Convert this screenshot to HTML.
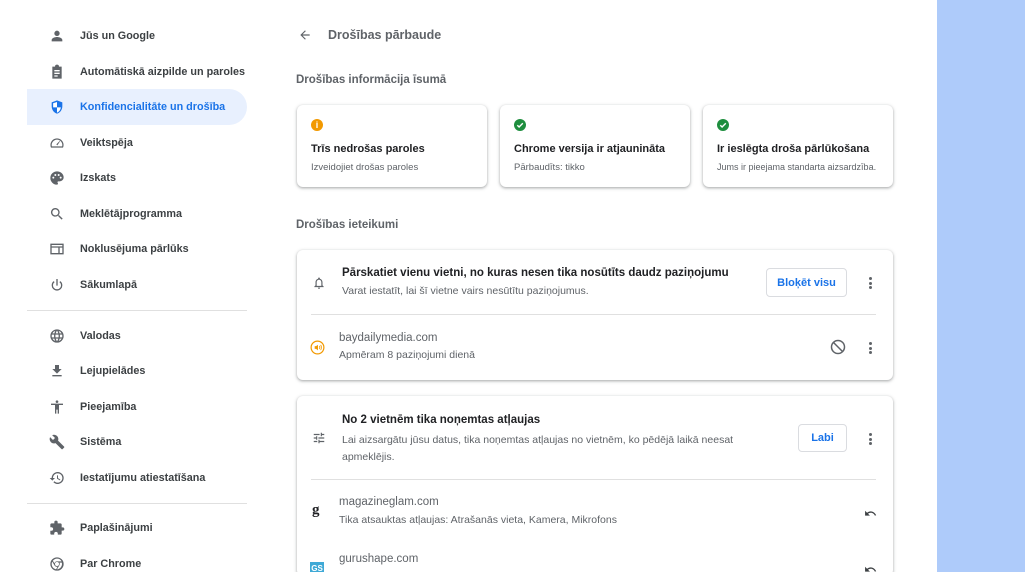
<!DOCTYPE html>
<html><head><meta charset="utf-8"><style>
*{margin:0;padding:0;box-sizing:border-box}
html,body{width:1025px;height:572px;overflow:hidden}
body{background:#fff;font-family:"Liberation Sans",Arial,sans-serif;position:relative;color:#202124}
.it{position:absolute;left:0;height:36px;width:247px;font-size:10.8px;font-weight:bold;color:#3c4043;white-space:nowrap}
.it svg{position:absolute;left:49px;top:10px;width:16px;height:16px;fill:#5f6368}
.it span{position:absolute;left:80px;top:12px}
.sel{background:#e8f0fe;left:27px;width:220px;border-radius:0 18px 18px 0}
.sel svg{left:22px;fill:#1a73e8}.sel span{left:53px;color:#1a73e8}
.hr{position:absolute;left:27px;width:220px;height:1px;background:#e0e0e0}
.right{position:absolute;left:937px;top:0;width:88px;height:572px;background:#aecbfa}
.abs{position:absolute;white-space:nowrap}
.card{position:absolute;background:#fff;border-radius:6px;box-shadow:0 1px 2px rgba(60,64,67,.3),0 1px 3px 1px rgba(60,64,67,.15);overflow:hidden}
.t{font-size:11px;font-weight:bold;color:#202124}
.s{font-size:9.5px;color:#5f6368}
.h{font-size:11.5px;font-weight:bold;color:#5f6368}
.btn{position:absolute;border:1px solid #dadce0;border-radius:4px;color:#1a73e8;font-size:11px;font-weight:bold;display:flex;align-items:center;justify-content:center}
.dots{position:absolute;width:3px}
.dots i{display:block;width:3px;height:3px;border-radius:50%;background:#5f6368;margin-bottom:1.5px}
.line{position:absolute;height:1px;background:#e0e0e0}
</style></head><body>
<div class="it" style="top:18px"><svg viewBox="0 0 24 24"><circle cx="12" cy="8" r="4"/><path d="M4 20v-2c0-3 5-4.5 8-4.5s8 1.5 8 4.5v2z"/></svg><span>Jūs un Google</span></div>
<div class="it" style="top:54px"><svg viewBox="0 0 24 24"><path d="M5 4h4a3 3 0 0 1 6 0h4v18H5zM8 9h8v2H8zm0 4h8v2H8zm0 4h5v2H8z" fill-rule="evenodd"/></svg><span>Automātiskā aizpilde un paroles</span></div>
<div class="it sel" style="top:89px"><svg viewBox="0 0 24 24"><path d="M12 2 4 5v6c0 5 3.4 9.7 8 11 4.6-1.3 8-6 8-11V5z"/><path d="M12 4.5v8H6.2V6.3zM12 12.5h5.8c-.5 3.8-2.9 6.9-5.8 7.9z" fill="#fff"/></svg><span>Konfidencialitāte un drošība</span></div>
<div class="it" style="top:125px"><svg viewBox="0 0 24 24"><path d="M12 5a10 10 0 0 0-9 14h18A10 10 0 0 0 12 5zm0 2a8 8 0 0 1 7.7 10H4.3A8 8 0 0 1 12 7zm4 2-5 5 1.5 1.5 4-6z"/></svg><span>Veiktspēja</span></div>
<div class="it" style="top:160px"><svg viewBox="0 0 24 24"><path d="M12 2a10 10 0 0 0 0 20c1 0 1.5-.7 1.5-1.5 0-1-.8-1.3-.8-2.2 0-.8.7-1.3 1.5-1.3H16a6 6 0 0 0 6-6C22 6 17.5 2 12 2zM6.5 13a1.5 1.5 0 1 1 0-3 1.5 1.5 0 0 1 0 3zm3-4a1.5 1.5 0 1 1 0-3 1.5 1.5 0 0 1 0 3zm5 0a1.5 1.5 0 1 1 0-3 1.5 1.5 0 0 1 0 3zm3 4a1.5 1.5 0 1 1 0-3 1.5 1.5 0 0 1 0 3z"/></svg><span>Izskats</span></div>
<div class="it" style="top:196px"><svg viewBox="0 0 24 24"><path d="M15.5 14h-.8l-.3-.3A6.5 6.5 0 1 0 9.5 16a6.5 6.5 0 0 0 4.2-1.6l.3.3v.8l5 5 1.5-1.5zm-6 0a4.5 4.5 0 1 1 0-9 4.5 4.5 0 0 1 0 9z"/></svg><span>Meklētājprogramma</span></div>
<div class="it" style="top:231px"><svg viewBox="0 0 24 24"><path d="M2 4h20v16H2zm2 6v8h10v-8zm12 0v8h4v-8zM4 6v2h16V6z" fill-rule="evenodd"/></svg><span>Noklusējuma pārlūks</span></div>
<div class="it" style="top:267px"><svg viewBox="0 0 24 24"><path d="M11 3h2v10h-2zM7 6.2l1.4 1.4a6 6 0 1 0 7.2 0L17 6.2A8 8 0 1 1 7 6.2z"/></svg><span>Sākumlapā</span></div>
<div class="hr" style="top:310px"></div>
<div class="it" style="top:318px"><svg viewBox="0 0 24 24"><path d="M12 2a10 10 0 1 0 0 20 10 10 0 0 0 0-20zm6.9 6h-3a15 15 0 0 0-1.4-3.6A8 8 0 0 1 18.9 8zM12 4c.8 1.2 1.5 2.5 1.9 4h-3.8c.4-1.4 1.1-2.8 1.9-4zM4.3 14a8 8 0 0 1 0-4h3.4a16 16 0 0 0 0 4zm.8 2h3a15 15 0 0 0 1.4 3.6A8 8 0 0 1 5.1 16zm3-8h-3a8 8 0 0 1 4.3-3.6C8.9 5.5 8.5 6.7 8.1 8zM12 20c-.8-1.2-1.5-2.5-1.9-4h3.8c-.4 1.4-1.1 2.8-1.9 4zm2.3-6H9.7a14 14 0 0 1 0-4h4.6a14 14 0 0 1 0 4zm.3 5.6c.6-1.1 1.1-2.300 1.4-3.6h3a8 8 0 0 1-4.4 3.6zm1.7-5.6a16 16 0 0 0 0-4h3.4a8 8 0 0 1 0 4z"/></svg><span>Valodas</span></div>
<div class="it" style="top:353px"><svg viewBox="0 0 24 24"><path d="M19 9h-4V3H9v6H5l7 7zM5 18v2h14v-2z"/></svg><span>Lejupielādes</span></div>
<div class="it" style="top:389px"><svg viewBox="0 0 24 24"><path d="M12 2a2 2 0 1 1 0 4 2 2 0 0 1 0-4zm9 7h-6v13h-2v-6h-2v6H9V9H3V7h18z"/></svg><span>Pieejamība</span></div>
<div class="it" style="top:424px"><svg viewBox="0 0 24 24"><path d="M22.7 19 13.6 9.9c.9-2.3.4-5-1.5-6.9-2-2-5-2.4-7.4-1.3L9 6 6 9 1.6 4.7C.4 7.1.9 10.1 2.9 12.1c1.9 1.9 4.6 2.4 6.9 1.5l9.1 9.1c.4.4 1 .4 1.4 0l2.3-2.3c.5-.4.5-1.1.1-1.4z"/></svg><span>Sistēma</span></div>
<div class="it" style="top:460px"><svg viewBox="0 0 24 24"><path d="M13 3a9 9 0 0 0-9 9H1l4 4 4-4H6a7 7 0 1 1 2 4.9l-1.4 1.4A9 9 0 1 0 13 3zm-1 5v5l4.3 2.5.7-1.2-3.5-2.1V8z"/></svg><span>Iestatījumu atiestatīšana</span></div>
<div class="hr" style="top:503px"></div>
<div class="it" style="top:510px"><svg viewBox="0 0 24 24"><path d="M20.5 11H19V7a2 2 0 0 0-2-2h-4V3.5a2.5 2.5 0 0 0-5 0V5H4a2 2 0 0 0-2 2v3.8h1.5a2.7 2.7 0 0 1 0 5.4H2V20a2 2 0 0 0 2 2h3.8v-1.5a2.7 2.7 0 0 1 5.4 0V22H17a2 2 0 0 0 2-2v-4h1.5a2.5 2.5 0 0 0 0-5z"/></svg><span>Paplašinājumi</span></div>
<div class="it" style="top:546px"><svg viewBox="0 0 24 24"><path d="M12 2a10 10 0 1 0 0 20 10 10 0 0 0 0-20zm0 2a8 8 0 0 1 6.9 4H12a4 4 0 0 0-3.9 3.1L5.8 7.2A8 8 0 0 1 12 4zm3 8a3 3 0 1 1-6 0 3 3 0 0 1 6 0zM4 12c0-1.3.3-2.5.9-3.6l3.5 6a4 4 0 0 0 4.5 1.6l-2.3 4A8 8 0 0 1 4 12zm8 8 3.5-6a4 4 0 0 0 .3-4h3.4A8 8 0 0 1 12 20z"/></svg><span>Par Chrome</span></div>

<svg class="abs" style="left:298px;top:28px" width="14" height="14" viewBox="0 0 24 24"><path d="M20 11H7.8l5.6-5.6L12 4l-8 8 8 8 1.4-1.4L7.8 13H20z" fill="#5f6368"/></svg>
<div class="abs" style="left:328px;top:28px;font-size:12.5px;font-weight:bold;color:#5f6368">Drošības pārbaude</div>
<div class="abs h" style="left:296px;top:74px">Drošības informācija īsumā</div>

<div class="card" style="left:297px;top:105px;width:190px;height:82px">
<div class="abs" style="left:14px;top:14px;width:12px;height:12px;border-radius:50%;background:#f29900;color:#fff;font-size:9px;font-weight:bold;text-align:center;line-height:12px">i</div>
<div class="abs t" style="left:14px;top:38px">Trīs nedrošas paroles</div>
<div class="abs s" style="left:14px;top:57px">Izveidojiet drošas paroles</div></div>
<div class="card" style="left:500px;top:105px;width:190px;height:82px">
<svg class="abs" style="left:14px;top:14px" width="12" height="12" viewBox="0 0 12 12"><circle cx="6" cy="6" r="6" fill="#1e8e3e"/><path d="M3.3 6.2 5.1 8 8.8 4.3" stroke="#fff" stroke-width="1.4" fill="none"/></svg>
<div class="abs t" style="left:14px;top:38px">Chrome versija ir atjaunināta</div>
<div class="abs s" style="left:14px;top:57px">Pārbaudīts: tikko</div></div>
<div class="card" style="left:703px;top:105px;width:190px;height:82px">
<svg class="abs" style="left:14px;top:14px" width="12" height="12" viewBox="0 0 12 12"><circle cx="6" cy="6" r="6" fill="#1e8e3e"/><path d="M3.3 6.2 5.1 8 8.8 4.3" stroke="#fff" stroke-width="1.4" fill="none"/></svg>
<div class="abs t" style="left:14px;top:38px">Ir ieslēgta droša pārlūkošana</div>
<div class="abs s" style="left:14px;top:57px;font-size:9px">Jums ir pieejama standarta aizsardzība.</div></div>

<div class="abs h" style="left:296px;top:219px">Drošības ieteikumi</div>

<div class="card" style="left:297px;top:250px;width:596px;height:130px">
<svg class="abs" style="left:15px;top:26px" width="14" height="14" viewBox="0 0 24 24"><path d="M12 22a2 2 0 0 0 2-2h-4a2 2 0 0 0 2 2zm6-6v-5c0-3-1.6-5.6-4.5-6.3V4a1.5 1.5 0 0 0-3 0v.7C7.6 5.4 6 8 6 11v5l-2 2v1h16v-1zm-2 1H8v-6c0-2.5 1.5-4.5 4-4.5s4 2 4 4.5z" fill="#5f6368"/></svg>
<div class="abs t" style="left:45px;top:17px;font-size:11.5px">Pārskatiet vienu vietni, no kuras nesen tika nosūtīts daudz paziņojumu</div>
<div class="abs s" style="left:45px;top:35px;font-size:10.5px">Varat iestatīt, lai šī vietne vairs nesūtītu paziņojumus.</div>
<div class="btn" style="left:469px;top:18px;width:81px;height:29px">Bloķēt visu</div>
<div class="dots" style="left:572px;top:27px"><i></i><i></i><i></i></div>
<div class="line" style="left:14px;top:64px;width:565px"></div>
<svg class="abs" style="left:13px;top:90px" width="15" height="15" viewBox="0 0 16 16"><circle cx="8" cy="8" r="6.8" fill="none" stroke="#f29900" stroke-width="1.3"/><path d="M5 6.5h1.5L8.5 5v6L6.5 9.5H5z" fill="#f29900"/><path d="M10 6.3c.6.6.6 2.8 0 3.4M11.3 5.3c1.1 1.1 1.1 4.3 0 5.4" stroke="#f29900" fill="none" stroke-width=".9"/></svg>
<div class="abs" style="left:42px;top:82px;font-size:11.5px;color:#5f6368">baydailymedia.com</div>
<div class="abs s" style="left:42px;top:99px;font-size:10.5px">Apmēram 8 paziņojumi dienā</div>
<svg class="abs" style="left:533px;top:89px" width="16" height="16" viewBox="0 0 16 16"><circle cx="8" cy="8" r="6.5" fill="none" stroke="#5f6368" stroke-width="1.5"/><path d="M3.5 3.5l9 9" stroke="#5f6368" stroke-width="1.5"/></svg>
<div class="dots" style="left:572px;top:92px"><i></i><i></i><i></i></div>
</div>

<div class="card" style="left:297px;top:396px;width:596px;height:180px">
<svg class="abs" style="left:15px;top:35px" width="14" height="14" viewBox="0 0 24 24"><path d="M3 17v2h6v-2zM3 5v2h10V5zm10 16v-2h8v-2h-8v-2h-2v6zM7 9v2H3v2h4v2h2V9zm14 4v-2H11v2zm-6-4h2V7h4V5h-4V3h-2z" fill="#5f6368"/></svg>
<div class="abs t" style="left:45px;top:18px;font-size:11.5px">No 2 vietnēm tika noņemtas atļaujas</div>
<div class="abs s" style="left:45px;top:36px;font-size:10.5px;line-height:17px;width:420px;white-space:normal">Lai aizsargātu jūsu datus, tika noņemtas atļaujas no vietnēm, ko pēdējā laikā neesat apmeklējis.</div>
<div class="btn" style="left:501px;top:28px;width:49px;height:28px">Labi</div>
<div class="dots" style="left:572px;top:37px"><i></i><i></i><i></i></div>
<div class="line" style="left:14px;top:83px;width:565px"></div>
<div class="abs" style="left:15px;top:106px;font-family:'Liberation Serif',serif;font-weight:bold;font-size:15px;color:#202124">g</div>
<div class="abs" style="left:42px;top:100px;font-size:11.5px;color:#5f6368">magazineglam.com</div>
<div class="abs s" style="left:42px;top:118px;font-size:10.5px">Tika atsauktas atļaujas: Atrašanās vieta, Kamera, Mikrofons</div>
<svg class="abs" style="left:567px;top:111px" width="13" height="13" viewBox="0 0 24 24"><path d="M12.5 8c-2.6 0-5 1-6.9 2.6L2 7v9h9l-3.6-3.6c1.4-1.2 3.2-1.9 5.1-1.9 3.5 0 6.5 2.3 7.6 5.5l2.4-.8C21 11.9 17.1 8 12.5 8z" fill="#3c4043"/></svg>
<div class="abs" style="left:13px;top:166px;width:14px;height:14px;background:#3fa9d6;color:#fff;font-size:8px;font-weight:bold;text-align:center;line-height:14px">GS</div>
<div class="abs" style="left:42px;top:157px;font-size:11.5px;color:#5f6368">gurushape.com</div>
<svg class="abs" style="left:567px;top:167px" width="13" height="13" viewBox="0 0 24 24"><path d="M12.5 8c-2.6 0-5 1-6.9 2.6L2 7v9h9l-3.6-3.6c1.4-1.2 3.2-1.9 5.1-1.9 3.5 0 6.5 2.3 7.6 5.5l2.4-.8C21 11.9 17.1 8 12.5 8z" fill="#3c4043"/></svg>
</div>

<div class="right"></div>
</body></html>
